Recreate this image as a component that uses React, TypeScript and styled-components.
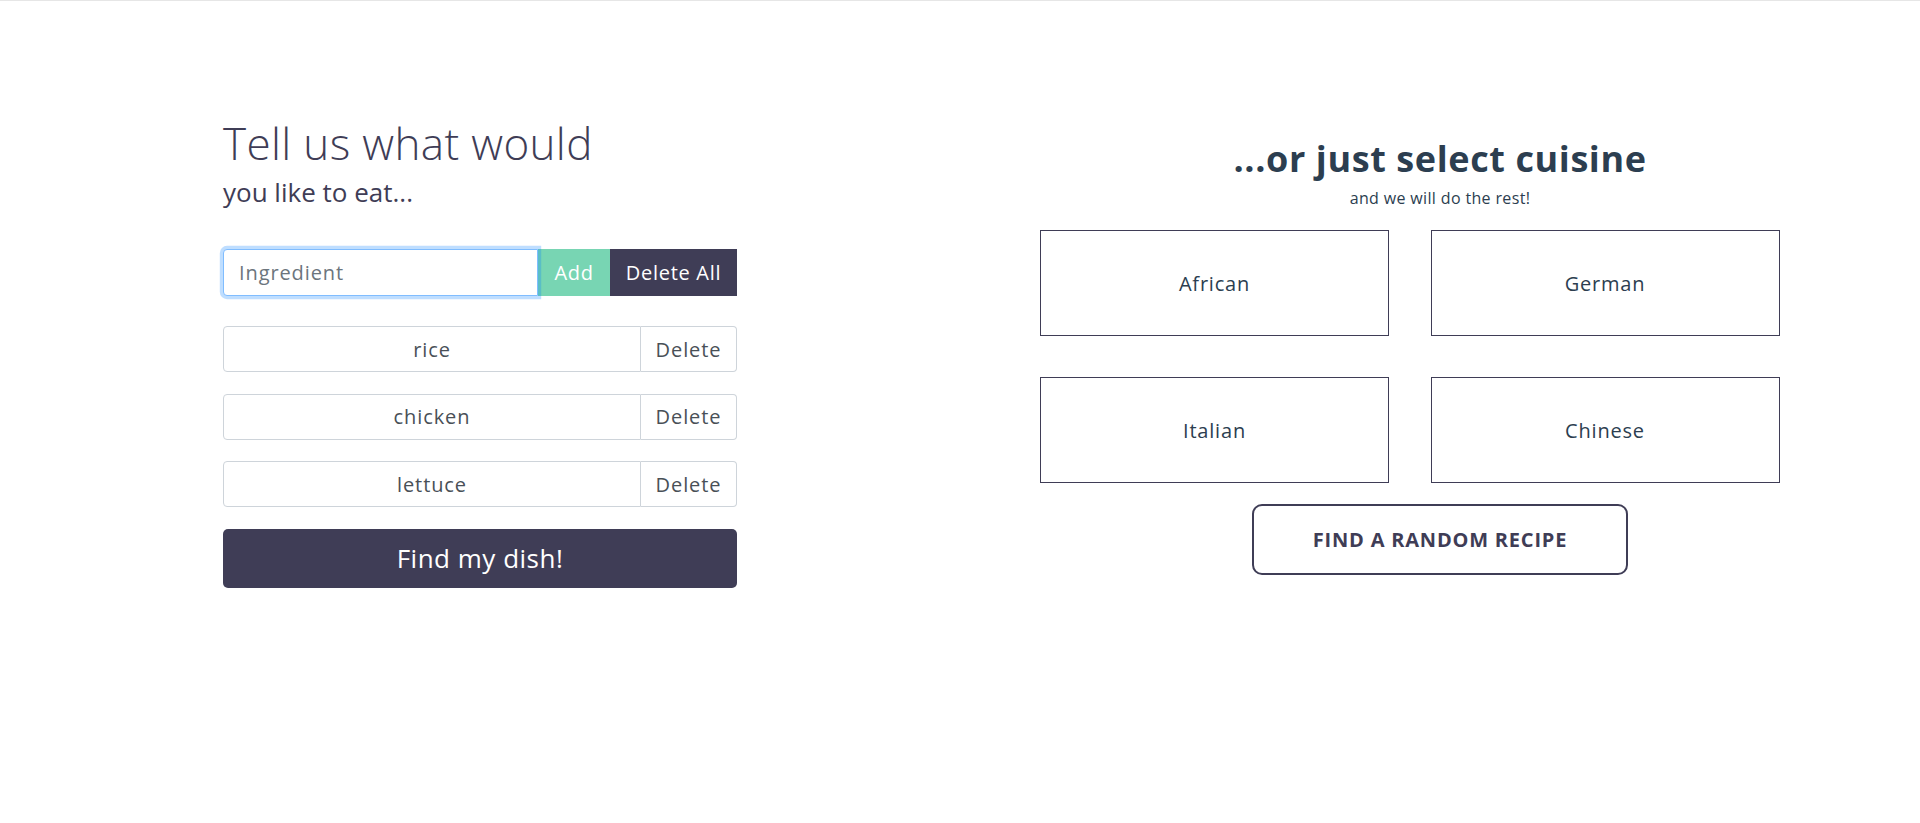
import React from "react";
import styled, { createGlobalStyle } from "styled-components";

const GlobalStyle = createGlobalStyle`
  *, *::before, *::after { box-sizing: border-box; }
  html, body { margin: 0; padding: 0; background: #ffffff; }
  body {
    font-family: "Open Sans", "Noto Sans", "DejaVu Sans", sans-serif;
    color: #3f3d56;
  }
`;

const FONT = `"Open Sans", "Noto Sans", "DejaVu Sans", sans-serif`;

const Page = styled.main`
  border-top: 1px solid #e6e6e6;
  display: flex;
  min-height: 822px;
`;

const Column = styled.section<{ $top: number }>`
  width: 50%;
  padding-top: ${(p) => p.$top}px;
  display: flex;
  flex-direction: column;
  align-items: center;
`;

/* ---------- left: ingredients ---------- */

const IngredientsPanel = styled.div`
  width: 514px;
  display: flex;
  flex-direction: column;
`;

const Title = styled.h1`
  margin: 0;
  font-family: ${FONT};
  font-weight: 300;
  font-size: 44px;
  line-height: 48px;
  letter-spacing: 0.35px;
  color: #3f3d56;
`;

const SubTitle = styled.h2`
  margin: 10px 0 0;
  font-family: ${FONT};
  font-weight: 400;
  font-size: 26px;
  line-height: 31px;
  color: #3f3d56;
`;

const InputGroup = styled.div`
  display: flex;
  height: 47px;
  margin-top: 41px;
`;

const IngredientInput = styled.input`
  flex: 1;
  min-width: 0;
  height: 100%;
  padding: 0 15px;
  border: 1px solid #80bdff;
  border-radius: 4px 0 0 4px;
  box-shadow: 0 0 0 3.2px rgba(0, 123, 255, 0.25);
  outline: none;
  position: relative;
  z-index: 2;
  font-family: ${FONT};
  font-size: 20px;
  letter-spacing: 0.9px;
  color: #495057;
  caret-color: #495057;
  background: #fff;
  &::placeholder {
    color: #6c757d;
  }
`;

const GroupButton = styled.button<{ $bg: string; $width: number }>`
  width: ${(p) => p.$width}px;
  height: 100%;
  padding: 0;
  border: none;
  border-radius: 0;
  background: ${(p) => p.$bg};
  color: #ffffff;
  font-family: ${FONT};
  font-size: 20px;
  letter-spacing: 0.7px;
  cursor: pointer;
`;

const ItemList = styled.ul`
  list-style: none;
  margin: 30px 0 0;
  padding: 0;
  display: flex;
  flex-direction: column;
  gap: 21.5px;
`;

const ItemRow = styled.li`
  display: flex;
  height: 46px;
`;

const ItemName = styled.div`
  flex: 1;
  display: flex;
  align-items: center;
  justify-content: center;
  border: 1px solid #ced4da;
  border-radius: 4px 0 0 4px;
  font-family: ${FONT};
  font-size: 20px;
  letter-spacing: 0.9px;
  color: #495057;
`;

const DeleteButton = styled.button`
  width: 96px;
  height: 100%;
  padding: 0;
  border: 1px solid #ced4da;
  border-left: none;
  border-radius: 0 4px 4px 0;
  background: #ffffff;
  font-family: ${FONT};
  font-size: 20px;
  letter-spacing: 0.9px;
  color: #495057;
  cursor: pointer;
`;

const FindButton = styled.button`
  margin-top: 21.5px;
  height: 59px;
  width: 100%;
  border: none;
  border-radius: 5px;
  background: #3f3d56;
  color: #ffffff;
  font-family: ${FONT};
  font-size: 26px;
  letter-spacing: 0.5px;
  cursor: pointer;
`;

/* ---------- right: cuisines ---------- */

const CuisineTitle = styled.h2`
  margin: 0;
  font-family: ${FONT};
  font-weight: 700;
  font-size: 36px;
  line-height: 43px;
  letter-spacing: 0.6px;
  color: #2c3e50;
  text-align: center;
`;

const CuisineSub = styled.p`
  margin: 9px 0 0;
  font-family: ${FONT};
  font-size: 16px;
  line-height: 19px;
  letter-spacing: 0.35px;
  color: #2c3e50;
  text-align: center;
`;

const CuisineGrid = styled.div`
  align-self: flex-start;
  margin: 22.7px 0 0 80px;
  display: grid;
  grid-template-columns: 349px 349px;
  grid-auto-rows: 106px;
  column-gap: 41.5px;
  row-gap: 41px;
`;

const CuisineCard = styled.button`
  display: flex;
  align-items: center;
  justify-content: center;
  padding: 0;
  border: 1px solid #3f3d56;
  border-radius: 0;
  background: #ffffff;
  font-family: ${FONT};
  font-size: 20px;
  letter-spacing: 0.8px;
  color: #2c3e50;
  cursor: pointer;
`;

const RandomButton = styled.button`
  margin-top: 21px;
  width: 376px;
  height: 71px;
  border: 2px solid #3f3d56;
  border-radius: 10px;
  background: #ffffff;
  font-family: ${FONT};
  font-weight: 700;
  font-size: 20px;
  letter-spacing: 0.8px;
  text-transform: uppercase;
  color: #3f3d56;
  cursor: pointer;
`;

const ingredients = ["rice", "chicken", "lettuce"];
const cuisines = ["African", "German", "Italian", "Chinese"];

export default function App() {
  return (
    <>
      <GlobalStyle />
      <Page>
        <Column $top={118}>
          <IngredientsPanel>
            <Title>Tell us what would</Title>
            <SubTitle>you like to eat...</SubTitle>
            <InputGroup>
              <IngredientInput placeholder="Ingredient" autoFocus />
              <GroupButton $bg="#78d5b3" $width={72}>
                Add
              </GroupButton>
              <GroupButton $bg="#3f3d56" $width={127}>
                Delete All
              </GroupButton>
            </InputGroup>
            <ItemList>
              {ingredients.map((item) => (
                <ItemRow key={item}>
                  <ItemName>{item}</ItemName>
                  <DeleteButton>Delete</DeleteButton>
                </ItemRow>
              ))}
            </ItemList>
            <FindButton>Find my dish!</FindButton>
          </IngredientsPanel>
        </Column>
        <Column $top={135.5}>
          <CuisineTitle>...or just select cuisine</CuisineTitle>
          <CuisineSub>and we will do the rest!</CuisineSub>
          <CuisineGrid>
            {cuisines.map((c) => (
              <CuisineCard key={c}>{c}</CuisineCard>
            ))}
          </CuisineGrid>
          <RandomButton>Find a random recipe</RandomButton>
        </Column>
      </Page>
    </>
  );
}
